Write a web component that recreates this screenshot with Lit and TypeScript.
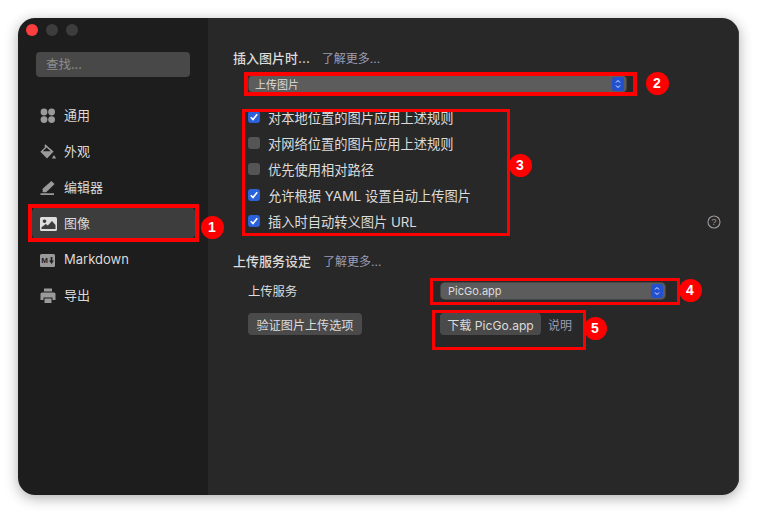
import { LitElement, html, css, svg } from "lit";
import { customElement } from "lit/decorators.js";

const icons: Record<string, unknown> = {
  grid: svg`<circle cx="4" cy="4" r="3.4"/><circle cx="11.6" cy="4" r="3.4"/><circle cx="4" cy="11.6" r="3.4"/><circle cx="11.6" cy="11.6" r="3.4"/>`,
  bucket: svg`<path fill-rule="evenodd" d="M5.6 0.2 7.2 2 13.6 7.6 7 14.4 0.4 7.8 5 3.2 4.4 1.4ZM6.6 3.4 2.8 7.2H10.6Z"/><path d="M14 11l2.2 3.6h-4.4Z"/>`,
  pencil: svg`<path d="M11.4 1 14.6 4 6.2 12.2H2.6V8.8Z"/><path d="M0.5 13.2h13.5v1.8H0.5Z"/>`,
  image: svg`<path fill-rule="evenodd" d="M1.5 1H15.5A1.5 1.5 0 0 1 17 2.5V13.5A1.5 1.5 0 0 1 15.5 15H1.5A1.5 1.5 0 0 1 0 13.5V2.5A1.5 1.5 0 0 1 1.5 1ZM4.5 3.4a1.8 1.8 0 1 0 .01 0ZM1.5 13H15.5V9L12 5 7.8 9.6 5.8 8 1.5 11.2Z"/>`,
  printer: svg`<path d="M4 0.5h8v3H4Z"/><path fill-rule="evenodd" d="M2 4.5h12a1.5 1.5 0 0 1 1.5 1.5V12H12.5V9.5h-9V12H.5V6A1.5 1.5 0 0 1 2 4.5Z"/><path d="M4.5 10.5h7V15h-7Z"/>`,
};

const navItems = [
  { icon: "grid", label: "通用", w: 16, h: 16 },
  { icon: "bucket", label: "外观", w: 17, h: 16 },
  { icon: "pencil", label: "编辑器", w: 16, h: 16 },
  { icon: "image", label: "图像", w: 17, h: 16, active: true },
  { icon: "md", label: "Markdown", w: 16, h: 16 },
  { icon: "printer", label: "导出", w: 16, h: 16 },
];

const checks = [
  { label: "对本地位置的图片应用上述规则", on: true },
  { label: "对网络位置的图片应用上述规则", on: false },
  { label: "优先使用相对路径", on: false },
  { label: "允许根据 YAML 设置自动上传图片", on: true },
  { label: "插入时自动转义图片 URL", on: true },
];

/* Annotations drawn over the screenshot, in page coordinates: x, y, w, h, stroke. */
const boxes = [
  [28, 204, 171, 38, 4],
  [244, 72, 393, 24, 4],
  [242, 109, 268, 127, 3],
  [430, 278, 250, 27, 3],
  [432, 310, 154, 40, 3],
];
const badges = [
  [212, 227, "1"],
  [657, 83, "2"],
  [520, 165, "3"],
  [690, 290, "4"],
  [595, 328, "5"],
];

@customElement("app-root")
export class AppRoot extends LitElement {
  static styles = css`
    :host {
      display: block;
      position: relative;
      width: 757px;
      height: 513px;
      overflow: hidden;
      background: #fff;
      font-family: Inter, "Noto Sans CJK SC", sans-serif;
      padding: 18px;
      box-sizing: border-box;
    }
    .window {
      display: flex;
      height: 477px;
      border-radius: 17px;
      overflow: hidden;
      box-shadow: 0 3px 14px rgba(0, 0, 0, 0.32);
    }
    .sidebar {
      width: 190px;
      flex: none;
      background: #1d1d1d;
      box-sizing: border-box;
      padding: 6px 0 0 8px;
    }
    .lights {
      display: flex;
      gap: 8px;
    }
    .light {
      width: 12px;
      height: 12px;
      border-radius: 50%;
      background: #3d3d3d;
    }
    .light.red {
      background: #fc3f3e;
    }
    .search {
      margin: 16px 18px 0 10px;
      height: 25px;
      border-radius: 4px;
      background: #484848;
      color: #8d8d8d;
      font-size: 12.5px;
      line-height: 25px;
      padding-left: 10px;
    }
    .nav {
      margin: 22px 13px 0 6px;
    }
    .item {
      display: flex;
      align-items: center;
      height: 32px;
      margin-bottom: 4px;
      border-radius: 5px;
      padding-left: 8px;
      color: #dadada;
      font-size: 13px;
      line-height: 16px;
    }
    .item.active {
      background: #3d3d3d;
    }
    .icon-slot {
      width: 24px;
      flex: none;
      display: flex;
      align-items: center;
      padding-top: 2px;
    }
    .icon-slot svg {
      display: block;
      fill: #9a9a9a;
    }
    .active .icon-slot svg {
      fill: #dedede;
    }
    .md {
      display: flex;
      align-items: center;
      justify-content: center;
      gap: 1px;
      width: 15px;
      height: 13px;
      border-radius: 1.5px;
      background: #9a9a9a;
      color: #222;
      font: 700 8px/13px "Liberation Sans", sans-serif;
    }
    .md .icon-arrow {
      fill: #222;
    }
    .main {
      flex: 1;
      background: #282828;
      padding: 30px 17px 0 25px;
      border-right: 1px solid #3c3c3c;
      color: #dcdcdc;
      min-width: 0;
    }
    .heading {
      display: flex;
      align-items: center;
      height: 18px;
      gap: 12px;
      font-size: 13px;
      font-weight: 500;
    }
    .link {
      color: #9c9cb4;
      font-size: 12px;
      font-weight: 400;
    }
    .select {
      display: flex;
      align-items: center;
      justify-content: space-between;
      box-sizing: border-box;
      height: 16px;
      border-radius: 4px;
      background: #5c5c5c;
      box-shadow: 0 0 0 1px #454545;
      padding: 0 2px 0 6px;
      color: #dcdcdc;
      font-size: 11px;
    }
    .select.first {
      margin: 10px 0 0 16px;
      width: 377px;
    }
    .stepper {
      width: 12px;
      height: 14px;
      border-radius: 3px;
      background: #2250cf;
    }
    .stepper svg {
      display: block;
      fill: none;
      stroke: #e6ecff;
      stroke-width: 1;
    }
    .checks {
      margin: 12px 0 0 15px;
    }
    .check {
      display: flex;
      align-items: center;
      height: 26px;
      gap: 8px;
      font-size: 13.25px;
    }
    .box {
      width: 12px;
      height: 12px;
      border-radius: 3px;
      background: #555;
      flex: none;
    }
    .box.on {
      background: #2b62d9;
    }
    .box svg {
      display: block;
      fill: none;
      stroke: #fff;
      stroke-width: 1.6;
    }
    .help {
      margin: 2px 0 0 auto;
      display: block;
      fill: none;
      stroke: #9a9a9a;
      stroke-width: 1.1;
    }
    .help text {
      fill: #9a9a9a;
      stroke: none;
      font: 9.5px "Liberation Sans", sans-serif;
    }
    .heading.second {
      margin-top: 17px;
    }
    .form {
      display: grid;
      grid-template-columns: 193px 224px;
      row-gap: 13px;
      margin: 13px 0 0 15px;
      font-size: 12.3px;
      align-items: center;
    }
    .select.second {
      padding-left: 7px;
      font-size: 11px;
    }
    .btn {
      display: inline-flex;
      align-items: center;
      justify-content: center;
      height: 22px;
      border-radius: 4px;
      background: #4a4a4a;
      color: #dcdcdc;
      font-size: 12.1px;
    }
    .btn.verify {
      width: 114px;
    }
    .btn.download {
      width: 101px;
      margin-left: -1px;
    }
    .dl {
      display: flex;
      align-items: center;
      gap: 7px;
    }
    .mark {
      position: absolute;
      box-sizing: border-box;
      border-style: solid;
      border-color: #f00;
      pointer-events: none;
    }
    .badge {
      position: absolute;
      width: 23px;
      height: 23px;
      margin: -11.5px 0 0 -11.5px;
      border-radius: 50%;
      background: #f00;
      color: #fff;
      font: 700 14px/23px "Liberation Sans", sans-serif;
      text-align: center;
    }
  `;

  private icon(name: string, w: number, h: number) {
    if (name === "md")
      return html`<div class="md">
        M<svg class="icon-arrow" width="5" height="7" viewBox="0 0 5 7"><path d="M1.6 0h1.8v3.6H5L2.5 7 0 3.6h1.6Z" style="fill:#222" /></svg>
      </div>`;
    return html`<svg width=${w} height=${h} viewBox="0 0 ${w} ${h}">${icons[name]}</svg>`;
  }

  private stepper() {
    return html`<div class="stepper">
      <svg width="12" height="14" viewBox="0 0 12 14"><path d="M4 5.5 6 3.5 8 5.5M4 8.5 6 10.5 8 8.5" /></svg>
    </div>`;
  }

  render() {
    return html`
      <div class="window">
        <aside class="sidebar">
          <div class="lights">
            <div class="light red"></div>
            <div class="light"></div>
            <div class="light"></div>
          </div>
          <div class="search">查找...</div>
          <nav class="nav">
            ${navItems.map(
              (n) => html`<div class="item ${n.active ? "active" : ""}">
                <span class="icon-slot">${this.icon(n.icon, n.w, n.h)}</span>${n.label}
              </div>`
            )}
          </nav>
        </aside>
        <main class="main">
          <div class="heading">插入图片时... <span class="link">了解更多...</span></div>
          <div class="select first"><span>上传图片</span>${this.stepper()}</div>
          <div class="checks">
            ${checks.map(
              (c, i) => html`<div class="check">
                <span class="box ${c.on ? "on" : ""}">
                  ${c.on
                    ? html`<svg width="12" height="12" viewBox="0 0 12 12"><path d="M2.8 6.2 5 8.6 9.2 3.2" /></svg>`
                    : ""}
                </span>
                ${c.label}
                ${i === checks.length - 1
                  ? html`<svg class="help" width="14" height="14" viewBox="0 0 14 14">
                      <circle cx="7" cy="7" r="6" /><text x="7" y="10.4" text-anchor="middle">?</text>
                    </svg>`
                  : ""}
              </div>`
            )}
          </div>
          <div class="heading second">上传服务设定 <span class="link">了解更多...</span></div>
          <div class="form">
            <div>上传服务</div>
            <div class="select second"><span>PicGo.app</span>${this.stepper()}</div>
            <div><span class="btn verify">验证图片上传选项</span></div>
            <div class="dl"><span class="btn download">下载 PicGo.app</span><span class="link">说明</span></div>
          </div>
        </main>
      </div>
      ${boxes.map(
        ([x, y, w, h, s]) =>
          html`<div class="mark" style="left:${x}px;top:${y}px;width:${w}px;height:${h}px;border-width:${s}px"></div>`
      )}
      ${badges.map(
        ([x, y, t]) => html`<div class="badge" style="left:${x}px;top:${y}px">${t}</div>`
      )}
    `;
  }
}
